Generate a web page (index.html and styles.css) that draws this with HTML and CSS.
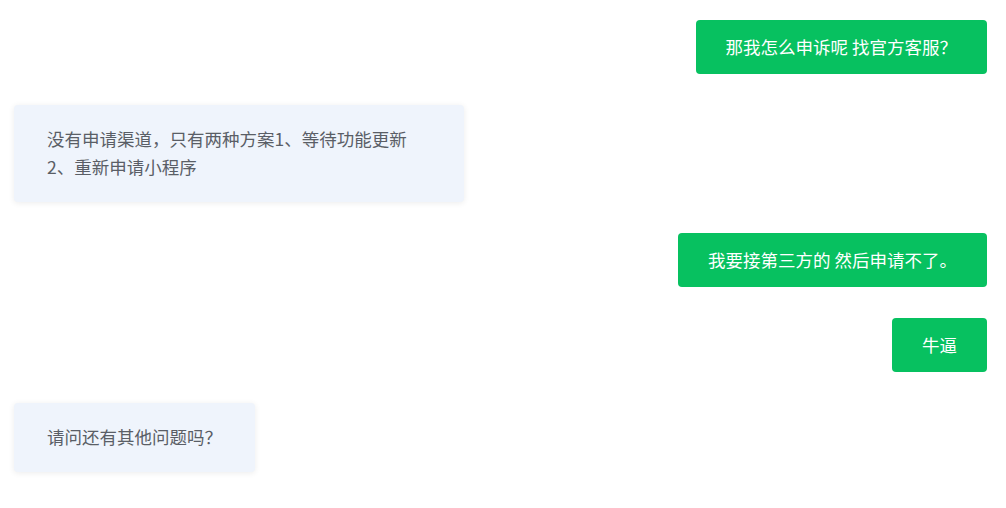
FILE: index.html
```
<!DOCTYPE html>
<html>
<head lang="zh">
    <meta charset="UTF-8">
    <title>Chat</title>
    <link rel="stylesheet" href="styles.css">
</head>
<body>
<div id="chat">
    <div class="msg msg-me">那我怎么申诉呢 找官方客服？</div>
    <div class="msg msg-bot">没有申请渠道，只有两种方案1、等待功能更新 2、重新申请小程序</div>
    <div class="msg msg-me">我要接第三方的 然后申请不了。</div>
    <div class="msg msg-me">牛逼</div>
    <div class="msg msg-bot">请问还有其他问题吗？</div>
</div>
</body>
</html>
```
FILE: styles.css
```
body, html {
    margin: 0;
    height: 100%;
    width: 100%;
    overflow: hidden;
    background-color: #fff;
}

#chat {
    display: flex;
    flex-direction: column;
    gap: 31px;
    padding: 20px 19px 20px 14px;
    font-family: "Noto Sans CJK SC", "Noto Sans", sans-serif;
    font-size: 17.5px;
    line-height: 28px;
}

.msg {
    max-width: 450px;
    box-sizing: border-box;
    border-radius: 4px;
}

/* Own messages */
.msg-me {
    align-self: flex-end;
    padding: 13px 30px;
    background-color: #07c160;
    color: #fff;
}

/* Replies */
.msg-bot {
    align-self: flex-start;
    padding: 20px 33px 21px;
    background-color: #eff4fc;
    color: #5a5e66;
    box-shadow: 0 1px 6px rgba(0, 0, 0, 0.08);
}
```
